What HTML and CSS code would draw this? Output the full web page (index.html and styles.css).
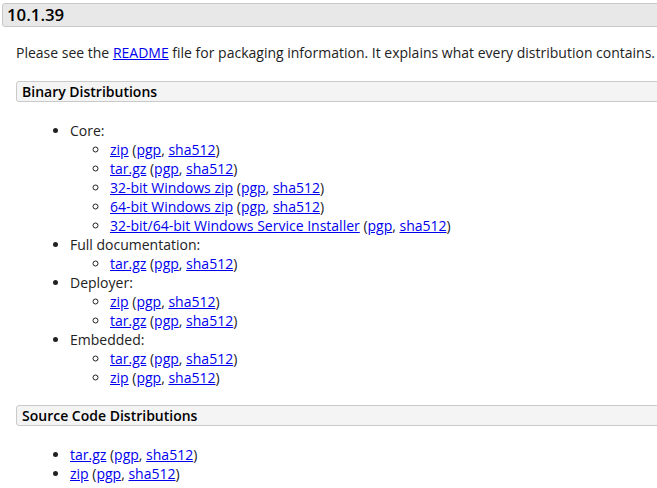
FILE: index.html
```html
<!doctype html>
<html lang="en">
  <head>
    <meta charset="UTF-8" />
    <meta name="viewport" content="width=device-width, initial-scale=1.0" />
    <title>Apache Tomcat 10 - Downloads</title>
    <link rel="stylesheet" href="styles.css">
  </head>
  <body>
    <div class="section">
      <h2>10.1.39</h2>
      <div class="text">
        <p>Please see the <a href="#">README</a> file for packaging information. It explains what every distribution contains.</p>

        <h3>Binary Distributions</h3>
        <ul>
          <li>Core:
            <ul>
              <li><a href="#">zip</a> (<a href="#">pgp</a>, <a href="#">sha512</a>)</li>
              <li><a href="#">tar.gz</a> (<a href="#">pgp</a>, <a href="#">sha512</a>)</li>
              <li><a href="#">32-bit Windows zip</a> (<a href="#">pgp</a>, <a href="#">sha512</a>)</li>
              <li><a href="#">64-bit Windows zip</a> (<a href="#">pgp</a>, <a href="#">sha512</a>)</li>
              <li><a href="#">32-bit/64-bit Windows Service Installer</a> (<a href="#">pgp</a>, <a href="#">sha512</a>)</li>
            </ul>
          </li>
          <li>Full documentation:
            <ul>
              <li><a href="#">tar.gz</a> (<a href="#">pgp</a>, <a href="#">sha512</a>)</li>
            </ul>
          </li>
          <li>Deployer:
            <ul>
              <li><a href="#">zip</a> (<a href="#">pgp</a>, <a href="#">sha512</a>)</li>
              <li><a href="#">tar.gz</a> (<a href="#">pgp</a>, <a href="#">sha512</a>)</li>
            </ul>
          </li>
          <li>Embedded:
            <ul>
              <li><a href="#">tar.gz</a> (<a href="#">pgp</a>, <a href="#">sha512</a>)</li>
              <li><a href="#">zip</a> (<a href="#">pgp</a>, <a href="#">sha512</a>)</li>
            </ul>
          </li>
        </ul>

        <h3 class="source">Source Code Distributions</h3>
        <ul>
          <li><a href="#">tar.gz</a> (<a href="#">pgp</a>, <a href="#">sha512</a>)</li>
          <li><a href="#">zip</a> (<a href="#">pgp</a>, <a href="#">sha512</a>)</li>
        </ul>
      </div>
    </div>
  </body>
</html>
```

FILE: styles.css
```css
body {
  margin: 0;
  font-family: "Open Sans", "DejaVu Sans", sans-serif;
  font-size: 14px;
  line-height: 19px;
  color: #222;
  background: #fff;
  overflow: hidden;
}
a {
  color: #0000ee;
}
.section h2 {
  margin: 3px -20px 0 2px;
  padding: 0 4px;
  font-size: 16.8px;
  line-height: 22px;
  font-weight: 600;
  color: #000;
  background: #e8e8e8;
  border: 1px solid #c8c8c8;
  border-radius: 3px;
}
.text {
  padding-left: 16px;
}
.text p {
  margin: 16px 0 0 0;
}
.text h3 {
  margin: 19px -20px 0 0;
  padding: 0 5px;
  font-size: 14px;
  line-height: 19px;
  font-weight: 600;
  color: #000;
  background: #f4f4f4;
  border: 1px solid #cacaca;
  border-radius: 3px;
}
.text h3.source {
  margin-top: 18px;
}
.text ul {
  margin: 19px 0 0 0;
  padding-left: 54px;
}
.text ul ul {
  margin: 0;
  padding-left: 40px;
}
```
